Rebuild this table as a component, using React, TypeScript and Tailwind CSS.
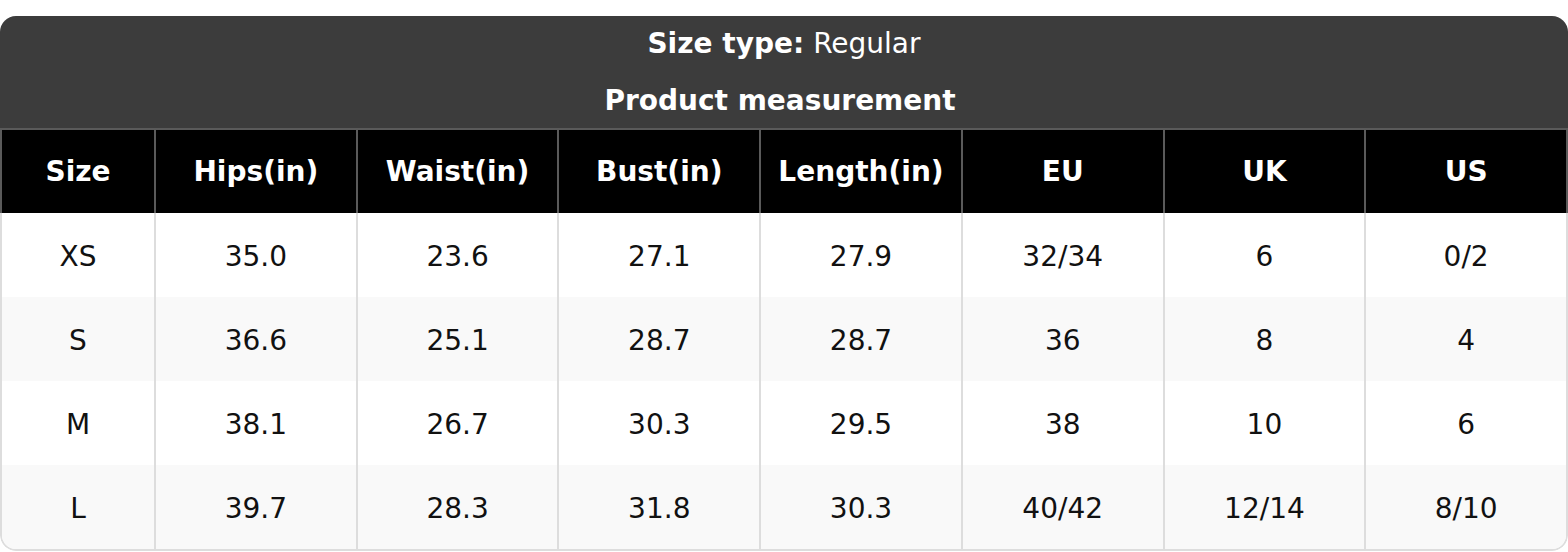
import React from "react";

const headers = ["Size", "Hips(in)", "Waist(in)", "Bust(in)", "Length(in)", "EU", "UK", "US"];
const rows = [
  ["XS", "35.0", "23.6", "27.1", "27.9", "32/34", "6", "0/2"],
  ["S", "36.6", "25.1", "28.7", "28.7", "36", "8", "4"],
  ["M", "38.1", "26.7", "30.3", "29.5", "38", "10", "6"],
  ["L", "39.7", "28.3", "31.8", "30.3", "40/42", "12/14", "8/10"],
];

export default function App() {
  return (
    <div className="w-[1568px] h-[552px] bg-white pt-[16px]" style={{ fontFamily: '"DejaVu Sans", sans-serif' }}>
      <div className="rounded-[16px] overflow-hidden">
        <div className="bg-[#3c3c3c] text-white text-[28px] border-b-2 border-[#5a5a5a]">
          <div className="h-[56px] flex items-center justify-center">
            <span className="font-bold">Size type:</span>
            <span className="ml-[9px]">Regular</span>
          </div>
          <div className="h-[56px] flex items-center justify-center font-bold pt-[1px] pr-[8px]">Product measurement</div>
        </div>
        <div className="grid grid-cols-[152px_repeat(7,1fr)] bg-black text-white text-[28px] font-bold h-[83px] border-x-2 border-[#5a5a5a]">
          {headers.map((h, i) => (
            <div
              key={h}
              className={`flex items-center justify-center ${i === 0 ? "" : "border-l-2 border-[#5a5a5a]"}`}
            >
              {h}
            </div>
          ))}
        </div>
        <div className="border-x-2 border-b-2 border-[#dddddd] rounded-b-[16px] overflow-hidden">
          {rows.map((r, ri) => (
            <div
              key={ri}
              className={`grid grid-cols-[152px_repeat(7,1fr)] h-[84px] text-[28px] text-[#111] ${ri % 2 === 1 ? "bg-[#f9f9f9]" : "bg-white"}`}
            >
              {r.map((c, ci) => (
                <div
                  key={ci}
                  className={`flex items-center justify-center pt-[3px] ${ci === 0 ? "" : "border-l-2 border-[#dddddd]"}`}
                >
                  {c}
                </div>
              ))}
            </div>
          ))}
        </div>
      </div>
    </div>
  );
}
